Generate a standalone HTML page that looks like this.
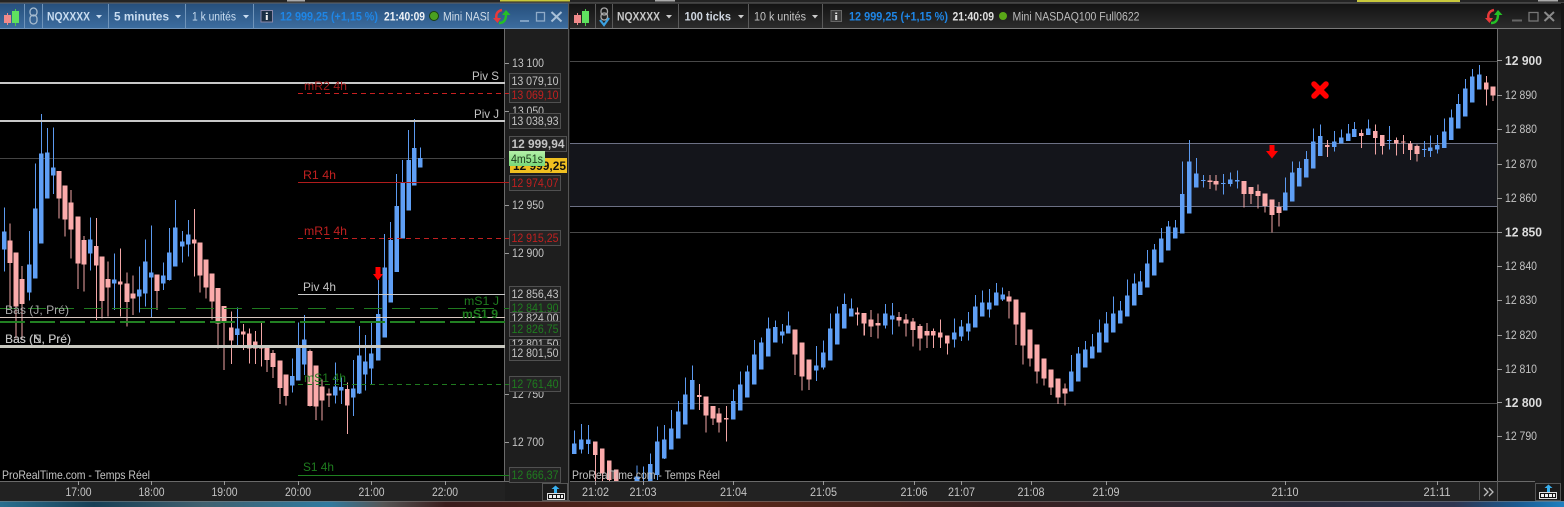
<!DOCTYPE html>
<html><head><meta charset="utf-8"><title>ProRealTime</title>
<style>
html,body{margin:0;padding:0;background:#111;width:1564px;height:507px;overflow:hidden}
svg{display:block}
text{font-family:"Liberation Sans",sans-serif;font-size:12px;fill:#c4c4c4}
.b{font-weight:bold}
.r{fill:#c02020}.dr{fill:#a01a1a}.gr{fill:#1f7c1f}
.bw{stroke:#5c9af0;stroke-width:3;fill:none;shape-rendering:crispEdges}
.bb{stroke:#5f9ff5;stroke-width:14;fill:none;shape-rendering:crispEdges}
.pw{stroke:#f2a6a6;stroke-width:3;fill:none;shape-rendering:crispEdges}
.pb{stroke:#fbabab;stroke-width:14;fill:none;shape-rendering:crispEdges}
.box{fill:#242424;stroke:#505050;stroke-width:1}
.tk{stroke:#999;stroke-width:1}
.ti{font-size:11.5px}
</style></head><body>
<svg width="1564" height="507" viewBox="0 0 1564 507" xmlns="http://www.w3.org/2000/svg">
<defs>
<linearGradient id="blu" x1="0" y1="0" x2="0" y2="1"><stop offset="0" stop-color="#264f7c"/><stop offset="1" stop-color="#3d6d9f"/></linearGradient>
<linearGradient id="drk" x1="0" y1="0" x2="0" y2="1"><stop offset="0" stop-color="#131313"/><stop offset="1" stop-color="#2c2c2c"/></linearGradient>
<linearGradient id="wall" x1="0" y1="0" x2="1" y2="0">
<stop offset="0" stop-color="#2a6f8f"/><stop offset=".06" stop-color="#173f55"/><stop offset=".13" stop-color="#40606f"/><stop offset=".21" stop-color="#2f7a9f"/><stop offset=".245" stop-color="#555"/><stop offset=".285" stop-color="#3a1c1c"/><stop offset=".45" stop-color="#5c2818"/><stop offset=".64" stop-color="#3a2020"/><stop offset=".83" stop-color="#2a2a3a"/><stop offset=".93" stop-color="#2e3550"/><stop offset=".97" stop-color="#1a5a90"/><stop offset="1" stop-color="#2080c0"/>
</linearGradient>
<linearGradient id="grn" x1="0" y1="0" x2="0" y2="1"><stop offset="0" stop-color="#b4f0a8"/><stop offset="1" stop-color="#78d878"/></linearGradient>
<clipPath id="cl"><rect x="0" y="29" width="505" height="452"/></clipPath>
<clipPath id="cr"><rect x="570" y="29" width="927" height="452"/></clipPath>
<g id="cdl"><path d="M7.5 13V25" stroke="#f08a8a"/><rect x="4" y="15" width="7" height="8" fill="#f08a8a"/><path d="M15.5 9V26" stroke="#45d045"/><rect x="12" y="11" width="7" height="12" fill="#5fe05f"/></g>
<g id="arw"><path d="M9 2C4 3 2 7 4 12" fill="none" stroke="#e83a3a" stroke-width="2.5"/><path d="M0 10L4.5 15L8 10Z" fill="#e83a3a"/><path d="M6 15C11 15 13 12 13 6" fill="none" stroke="#25c025" stroke-width="2.5"/><path d="M9 7L13 2L17.500 7Z" fill="#25c025"/></g>
</defs>

<!-- desktop strips -->
<rect width="1564" height="507" fill="#1a1a1a"/>
<rect x="0" y="0" width="1564" height="3" fill="#242424"/>
<rect x="500" y="0" width="70" height="1.500" fill="#c8c83c"/>
<rect x="1357" y="0" width="103" height="2" fill="#c8c83c"/>
<rect x="287" y="0" width="18" height="1.500" fill="#aaa"/>
<rect x="655" y="0" width="20" height="1.500" fill="#aaa"/>
<rect x="1538" y="0" width="20" height="1.500" fill="#aaa"/>
<rect x="0" y="2.500" width="1564" height="1" fill="#666"/>
<rect x="0" y="501" width="1564" height="6" fill="url(#wall)"/>
<rect x="0" y="500.500" width="1564" height="1" fill="#888"/>

<!-- LEFT WINDOW -->
<rect x="0" y="29" width="505" height="452" fill="#000"/>
<rect x="505" y="29" width="64" height="472" fill="#1e1e1e"/>
<rect x="0" y="481" width="505" height="20" fill="#222"/>
<path d="M504.500 29V481M0 481.500H542" stroke="#6a6a6a"/>
<path d="M0 158.500H505" stroke="#444"/>

<g clip-path="url(#cl)"><g transform="translate(0,110) scale(.33333)">
<path class="bw" d="M13 292V484M88 363V572M106 160V506M124 12V400M142 54V266M160 52V252M271 322V482M343 430V600M418 469V608M436 388V590M454 346V622M490 457V540M508 354V512M526 270V470M547 363V458M565 330V440M712 592V708M877 745V848M895 638V812M913 615V795M1006 757V880M1024 802V882M1060 750V918M1078 648V852M1096 675V842M1114 638V822M1135 510V752M1154 372V683M1172 336V578M1190 192V486M1208 150V385M1226 60V302M1243 27V227M1261 113V173"/>
<path class="bb" d="M13 364V419M88 463V548M106 295V506M124 130V400M142 127V266M160 172V197M271 388V431M343 508V521M418 538V560M436 454V551M454 487V503M490 496V521M508 427V510M526 352V470M547 394V410M565 373V404M712 655V675M877 798V827M895 708V812M913 688V764M1006 830V857M1024 831V842M1060 836V863M1078 736V851M1096 754V794M1114 731V776M1135 612V752M1154 472V683M1172 390V578M1190 288V486M1208 219V385M1226 150V302M1243 114V227M1261 144V173"/>
<path class="pw" d="M30 340V600M48 427V685M66 468V685M177 183V326M195 226V380M213 240V446M234 319V537M252 378V545M289 324V630M306 439V625M324 454V620M361 415V620M381 487V650M399 496V615M471 493V600M583 297V500M600 397V548M618 448V566M636 490V628M654 534V715M672 588V780M694 605V762M730 642V720M748 655V760M766 663V762M784 638V770M801 710V786M819 720V804M840 751V882M858 793V887M930 718V890M948 766V930M966 808V932M987 835V891M1042 818V972"/>
<path class="pb" d="M30 391V459M48 427V590M66 507V582M177 183V266M195 226V329M213 277V359M234 319V461M252 390V464M289 408V467M306 439V573M324 507V533M361 514V524M381 520V576M399 550V566M471 493V543M583 388V401M600 397V497M618 448V533M636 490V575M654 534V640M672 588V638M694 652V692M730 664V674M748 670V716M766 694V716M784 708V716M801 712V750M819 729V771M840 751V834M858 793V858M930 723V888M948 766V890M966 830V872M987 850V857M1042 837V887"/>
</g></g>

<!-- left level lines -->
<rect x="0" y="82" width="505" height="2" fill="#c8c8c8"/>
<path d="M298 93.500H510" stroke="#c82020" stroke-dasharray="5 4"/>
<rect x="0" y="120" width="505" height="2" fill="#c8c8c8"/>
<path d="M298 182.500H510" stroke="#b01c1c"/>
<path d="M298 238.500H510" stroke="#c02020" stroke-dasharray="5 4"/>
<path d="M298 294.500H505" stroke="#c8c8c8"/>
<path d="M0 308.500H510" stroke="#1f7a1f" stroke-dasharray="18 10"/>
<path d="M0 317.500H505" stroke="#d8c8c0"/>
<path d="M0 322H510" stroke="#228022" stroke-width="2" stroke-dasharray="25 5"/>
<rect x="0" y="345" width="505" height="3" fill="#c8c8c0"/>
<path d="M298 384.500H510" stroke="#1f7a1f" stroke-dasharray="5 4"/>
<path d="M298 475.500H510" stroke="#1f8020"/>

<!-- left labels -->
<text x="472" y="80" textLength="27" lengthAdjust="spacingAndGlyphs">Piv S</text>
<text x="304" y="90" class="dr" textLength="43" lengthAdjust="spacingAndGlyphs">mR2 4h</text>
<text x="474" y="118" textLength="25" lengthAdjust="spacingAndGlyphs">Piv J</text>
<text x="303" y="179" class="r" textLength="33" lengthAdjust="spacingAndGlyphs">R1 4h</text>
<text x="304" y="235" class="r" textLength="43" lengthAdjust="spacingAndGlyphs">mR1 4h</text>
<text x="303" y="291" textLength="33" lengthAdjust="spacingAndGlyphs">Piv 4h</text>
<text x="464" y="305" class="gr" textLength="35" lengthAdjust="spacingAndGlyphs">mS1 J</text>
<text x="462" y="318" class="gr b" textLength="36" lengthAdjust="spacingAndGlyphs">mS1 9</text>
<text x="5" y="314" style="fill:#a8a8a8" textLength="64" lengthAdjust="spacingAndGlyphs">Bas (J, Pré)</text>
<text x="5" y="343" style="fill:#b8b8b8" textLength="66" lengthAdjust="spacingAndGlyphs">Bas (S, Pré)</text>
<text x="5" y="343" style="fill:#c4c4c4" textLength="66" lengthAdjust="spacingAndGlyphs">Bas (N, Pré)</text>
<text x="304" y="382" class="gr" textLength="42" lengthAdjust="spacingAndGlyphs">mS1 4h</text>
<text x="303" y="471" class="gr" textLength="31" lengthAdjust="spacingAndGlyphs">S1 4h</text>
<text x="2" y="479" textLength="148" lengthAdjust="spacingAndGlyphs">ProRealTime.com - Temps Réel</text>
<rect x="375.500" y="267" width="5" height="8" fill="#f00"/><path d="M373 274H383L378 280.500Z" fill="#f00"/>

<!-- left axis -->
<path class="tk" d="M505 63.500H509M505 111.500H509M505 205.500H509M505 253.500H509M505 394.500H509M505 442.500H509"/>
<text x="512" y="67" textLength="32" lengthAdjust="spacingAndGlyphs">13 100</text>
<text x="512" y="115" textLength="32" lengthAdjust="spacingAndGlyphs">13 050</text>
<text x="512" y="209" textLength="32" lengthAdjust="spacingAndGlyphs">12 950</text>
<text x="512" y="257" textLength="32" lengthAdjust="spacingAndGlyphs">12 900</text>
<text x="512" y="398" textLength="32" lengthAdjust="spacingAndGlyphs">12 750</text>
<text x="512" y="446" textLength="32" lengthAdjust="spacingAndGlyphs">12 700</text>

<rect class="box" x="509.500" y="73.500" width="51" height="15"/><text x="511.500" y="85" textLength="47" lengthAdjust="spacingAndGlyphs">13 079,10</text>
<rect class="box" x="509.500" y="88.500" width="51" height="14"/><text x="511.500" y="99" class="r" textLength="47" lengthAdjust="spacingAndGlyphs">13 069,10</text>
<rect class="box" x="509.500" y="113.500" width="51" height="15"/><text x="511.500" y="125" textLength="47" lengthAdjust="spacingAndGlyphs">13 038,93</text>
<rect class="box" x="509.500" y="136.500" width="57" height="15"/><text x="511.500" y="148" class="b" textLength="53" lengthAdjust="spacingAndGlyphs">12 999,94</text>
<rect x="510" y="158" width="57" height="15" fill="#f0c020"/><text x="513" y="170" class="b" style="fill:#111" textLength="53" lengthAdjust="spacingAndGlyphs">12 999,25</text>
<rect x="509" y="151" width="36" height="15" fill="url(#grn)"/><text x="511" y="163" style="fill:#1c3a1c" textLength="32" lengthAdjust="spacingAndGlyphs">4m51s</text>
<rect class="box" x="509.500" y="175.500" width="51" height="15"/><text x="511.500" y="187" class="r" textLength="47" lengthAdjust="spacingAndGlyphs">12 974,07</text>
<rect class="box" x="509.500" y="230.500" width="51" height="15"/><text x="511.500" y="242" class="r" textLength="47" lengthAdjust="spacingAndGlyphs">12 915,25</text>
<rect class="box" x="509.500" y="286.500" width="51" height="15"/><text x="511.500" y="298" textLength="47" lengthAdjust="spacingAndGlyphs">12 856,43</text>
<rect class="box" x="509.500" y="300.500" width="51" height="15"/><text x="511.500" y="312" class="gr" textLength="47" lengthAdjust="spacingAndGlyphs">12 841,90</text>
<rect class="box" x="509.500" y="312.500" width="51" height="12"/><text x="511.500" y="322" textLength="47" lengthAdjust="spacingAndGlyphs">12 824,00</text>
<rect class="box" x="509.500" y="321.500" width="51" height="15"/><text x="511.500" y="333" class="gr" textLength="47" lengthAdjust="spacingAndGlyphs">12 826,75</text>
<rect class="box" x="509.500" y="339.500" width="51" height="8"/><text x="511.500" y="348" textLength="47" lengthAdjust="spacingAndGlyphs">12 801,50</text>
<rect class="box" x="509.500" y="345.500" width="51" height="15"/><text x="511.500" y="357" textLength="47" lengthAdjust="spacingAndGlyphs">12 801,50</text>
<rect class="box" x="509.500" y="376.500" width="51" height="15"/><text x="511.500" y="388" class="gr" textLength="47" lengthAdjust="spacingAndGlyphs">12 761,40</text>
<rect class="box" x="509.500" y="467.500" width="51" height="15"/><text x="511.500" y="479" class="gr" textLength="47" lengthAdjust="spacingAndGlyphs">12 666,37</text>

<!-- left time axis -->
<path class="tk" d="M78.500 481V485M151.500 481V485M224.500 481V485M298.500 481V485M371.500 481V485M445.500 481V485"/>
<g text-anchor="middle">
<text x="78.500" y="496" textLength="26" lengthAdjust="spacingAndGlyphs">17:00</text>
<text x="151.500" y="496" textLength="26" lengthAdjust="spacingAndGlyphs">18:00</text>
<text x="224.500" y="496" textLength="26" lengthAdjust="spacingAndGlyphs">19:00</text>
<text x="298" y="496" textLength="26" lengthAdjust="spacingAndGlyphs">20:00</text>
<text x="371.500" y="496" textLength="26" lengthAdjust="spacingAndGlyphs">21:00</text>
<text x="445" y="496" textLength="26" lengthAdjust="spacingAndGlyphs">22:00</text>
</g>
<rect x="542.500" y="483.500" width="25" height="17" fill="#1a1a1a" stroke="#555"/>
<path d="M555.500 493V488" stroke="#38b0f0" stroke-width="3"/><path d="M551.500 489L555.500 485.500L559.500 489Z" fill="#38b0f0"/>
<rect x="547.500" y="493.500" width="17" height="6" fill="#111" stroke="#ddd"/><path d="M549 496.500H563" stroke="#eee" stroke-width="3" stroke-dasharray="3 1"/>

<!-- left title bar -->
<rect x="0" y="3.500" width="569" height="25" fill="url(#blu)"/>
<path d="M0 28.500H569" stroke="#7093b8"/>
<path d="M24.500 4V28M42.500 4V28M108.500 4V28M185.500 4V28M253.500 4V28" stroke="#6f94ba"/>
<use href="#cdl"/>
<rect x="30" y="8" width="7" height="8" rx="3.500" fill="none" stroke="#a8bdd0" stroke-width="1.300"/>
<rect x="30" y="15" width="7" height="9" rx="3.500" fill="none" stroke="#a8bdd0" stroke-width="1.300"/>
<text x="47" y="20.500" class="b ti" style="fill:#c8dcf0" textLength="43" lengthAdjust="spacingAndGlyphs">NQXXXX</text>
<path d="M96 15H102L99 18.500Z" fill="#c8dcf0"/>
<text x="114" y="20.500" class="b ti" style="fill:#c8dcf0" textLength="55" lengthAdjust="spacingAndGlyphs">5 minutes</text>
<path d="M175 15H181L178 18.500Z" fill="#c8dcf0"/>
<text x="192" y="20.500" class="ti" style="fill:#c8dcf0" textLength="44" lengthAdjust="spacingAndGlyphs">1 k unités</text>
<path d="M243 15H249L246 18.500Z" fill="#c8dcf0"/>
<rect x="261" y="10.500" width="11.500" height="11.500" fill="#1b2f44" stroke="#88a"/>
<path d="M266.800 12.500V14M266.800 15V20" stroke="#eee" stroke-width="2"/>
<text x="280" y="20.500" class="b ti" style="fill:#1f86e6" textLength="98" lengthAdjust="spacingAndGlyphs">12 999,25 (+1,15 %)</text>
<text x="384" y="20.500" class="b ti" style="fill:#eef2f6" textLength="41" lengthAdjust="spacingAndGlyphs">21:40:09</text>
<circle cx="434" cy="16" r="4.500" fill="#4aa020" stroke="#1a4010"/>
<svg x="443" y="4" width="46" height="24"><text x="0" y="16.500" class="ti" style="fill:#d0dce8" textLength="127" lengthAdjust="spacingAndGlyphs">Mini NASDAQ100 Full0622</text></svg>
<use href="#arw" x="493" y="8"/>
<path d="M520 21H529" stroke="#7d9fc2" stroke-width="2"/>
<rect x="536.500" y="12.500" width="8" height="8.500" fill="none" stroke="#8fabc8" stroke-width="1.300"/>
<path d="M551.500 12L561.500 21.500M561.500 12L551.500 21.500" stroke="#a8c0d8" stroke-width="2"/>
<path d="M568.500 3V501" stroke="#555"/>

<!-- RIGHT WINDOW -->
<rect x="570" y="29" width="927" height="452" fill="#000"/>
<rect x="1497" y="29" width="64" height="472" fill="#1e1e1e"/>
<rect x="570" y="481" width="927" height="20" fill="#222"/>
<rect x="570" y="143" width="927" height="63" fill="#14151b"/>
<path d="M570 61.500H1497M570 232.500H1497M570 403.500H1497" stroke="#484848"/>
<path d="M570 143.500H1497M570 206.500H1497" stroke="#6c7084"/>
<path d="M1497.500 29V481M570 481.500H1535" stroke="#6a6a6a"/>

<g clip-path="url(#cr)">
<g transform="translate(570,280) scale(.33333)">
<path class="bw" d="M13 452V522M34 432V520M55 435V522M201 556V610M220 560V610M241 520V605M262 440V600M283 435V537M304 390V509M325 363V476M346 292V434M367 256V389M490 328V419M511 274V392M532 256V353M553 180V314M574 172V269M595 112V230M616 121V188M637 132V190M655 94V161M739 198V303M760 181V268M781 100V242M802 79V194M823 40V146M844 55V110"/>
<path class="bb" d="M13 490V522M34 478V508M55 478V492M201 590V610M241 552V605M262 484V585M283 478V536M304 445V509M325 394V475M346 343V434M367 300V389M490 363V419M511 313V392M532 274V353M553 223V314M574 187V269M595 145V230M616 141V188M637 154V167M655 136V161M739 256V272M760 217V263M781 145V242M802 100V194M823 72V146M844 85V110"/>
<path class="pw" d="M76 484V610M97 505V610M118 541V610M139 568V610M388 312V390M408 349V458M429 378V435M447 384V458M469 378V485M675 148V285M696 187V332M717 238V330M862 82V137M883 100V167"/>
<path class="pb" d="M76 484V525M97 505V580M118 541V600M139 568V610M388 345V351M408 349V407M429 378V416M447 400V428M469 414V419M675 148V224M696 187V290M717 238V299M862 97V104M883 100V131"/>
</g>
<g transform="translate(860,130) scale(.33333)">
<path class="bw" d="M76 522V596M97 519V613M283 565V653M304 570V633M325 546V632M346 495V593M367 482V560M388 477V563M409 459V527M428 472V513M634 675V785M655 651V755M676 633V713M697 612V686M718 568V668M739 546V638M760 499V608M781 513V581M802 448V560M823 430V527M841 423V495M862 360V473M883 342V437M904 294V398M925 273V362M946 270V326M967 94V311M988 30V250M1009 84V173"/>
<path class="bb" d="M76 550V587M97 556V569M283 607V629M304 589V620M325 580V605M346 529V593M367 517V560M388 517V539M409 487V527M428 493V509M634 724V785M655 670V755M676 658V713M697 649V686M718 607V668M739 580V638M760 550V608M781 541V581M802 496V560M823 460V527M841 454V495M862 400V473M883 358V437M904 325V398M925 289V362M946 292V326M967 192V311M988 94V250M1009 130V173"/>
<path class="pw" d="M12 549V617M33 540V621M54 550V626M117 546V590M138 552V620M159 564V650M180 582V662M201 579V654M220 595V654M241 568V654M262 616V674M447 483V566M468 508V645M489 547V704M510 598V710M531 643V760M552 685V767M573 718V795M594 745V822M615 760V827"/>
<path class="pb" d="M12 549V581M33 568V590M54 579V587M117 561V572M138 568V581M159 574V600M180 588V626M194 610H208M213 610H227M234 615H248M262 616V641M447 499V515M468 508V584M489 547V647M510 598V686M531 643V725M552 685V746M573 718V773M594 745V803M615 775V791"/>
</g>
<g transform="translate(1200,60) scale(.33333)">
<path class="bw" d="M10 345V383M70 342V404M91 338V380M112 332V385M256 352V452M277 304V425M298 304V380M319 273V353M340 205V326M361 193V288M403 213V275M424 208V251M445 192V243M463 186V231M505 178V225M568 198V268M673 243V291M691 226V291M712 225V280M733 175V264M754 148V240M775 102V206M796 57V170M817 27V128M838 15V89"/>
<path class="bb" d="M91 358V372M112 360V365M256 397V452M277 337V425M298 324V380M319 297V353M340 244V326M361 228V288M403 244V261M424 232V251M445 220V243M463 207V231M505 205V225M691 262V273M712 255V268M733 214V264M754 172V240M775 132V206M796 85V170M817 49V128M838 43V89"/>
<path d="M3 361H17M63 371H77M561 241H575M666 269H680" stroke="#5f9ff5" stroke-width="3" fill="none" shape-rendering="crispEdges"/>
<path class="pw" d="M30 345V387M48 345V392M132 363V443M153 381V432M174 373V445M195 400V458M216 418V518M237 426V500M382 240V291M484 208V264M526 193V283M547 225V283M589 232V286M610 225V282M631 243V300M651 254V305M859 48V137M879 79V123"/>
<path class="pb" d="M30 361V366M48 363V374M132 363V402M153 381V402M174 393V408M195 400V438M216 418V465M237 441V459M382 255V261M484 219V228M526 213V234M547 225V258M589 240V251M610 245V248M631 250V270M651 258V282M859 67V89M879 79V107"/>
</g>
</g>

<!-- markers -->
<rect x="1269.500" y="145" width="5" height="7" fill="#f00"/><path d="M1266 151H1278L1272 158.500Z" fill="#f00"/>
<path d="M1314 84L1326 96M1326 84L1314 96" stroke="#f00" stroke-width="5.500" stroke-linecap="round"/>

<text x="572" y="479" textLength="148" lengthAdjust="spacingAndGlyphs">ProRealTime.com - Temps Réel</text>

<!-- right axis -->
<path class="tk" d="M1497 60.500H1502M1497 95.500H1502M1497 129.500H1502M1497 164.500H1502M1497 198.500H1502M1497 232.500H1502M1497 266.500H1502M1497 300.500H1502M1497 335.500H1502M1497 369.500H1502M1497 402.500H1502M1497 436.500H1502"/>
<g>
<text x="1505" y="65" class="b" style="font-size:12.500px;fill:#dcdcdc" textLength="37" lengthAdjust="spacingAndGlyphs">12 900</text>
<text x="1505" y="99" textLength="32" lengthAdjust="spacingAndGlyphs">12 890</text>
<text x="1505" y="133" textLength="32" lengthAdjust="spacingAndGlyphs">12 880</text>
<text x="1505" y="168" textLength="32" lengthAdjust="spacingAndGlyphs">12 870</text>
<text x="1505" y="202" textLength="32" lengthAdjust="spacingAndGlyphs">12 860</text>
<text x="1505" y="236.500" class="b" style="font-size:12.500px;fill:#dcdcdc" textLength="37" lengthAdjust="spacingAndGlyphs">12 850</text>
<text x="1505" y="270" textLength="32" lengthAdjust="spacingAndGlyphs">12 840</text>
<text x="1505" y="304" textLength="32" lengthAdjust="spacingAndGlyphs">12 830</text>
<text x="1505" y="339" textLength="32" lengthAdjust="spacingAndGlyphs">12 820</text>
<text x="1505" y="373" textLength="32" lengthAdjust="spacingAndGlyphs">12 810</text>
<text x="1505" y="407" class="b" style="font-size:12.500px;fill:#dcdcdc" textLength="37" lengthAdjust="spacingAndGlyphs">12 800</text>
<text x="1505" y="440" textLength="32" lengthAdjust="spacingAndGlyphs">12 790</text>
</g>

<!-- right time axis -->
<path class="tk" d="M595.500 481V485M643.500 481V485M733.500 481V485M823.500 481V485M914.500 481V485M961.500 481V485M1031.500 481V485M1106.500 481V485M1285.500 481V485M1437.500 481V485"/>
<g text-anchor="middle">
<text x="595.500" y="496" textLength="27" lengthAdjust="spacingAndGlyphs">21:02</text>
<text x="643" y="496" textLength="27" lengthAdjust="spacingAndGlyphs">21:03</text>
<text x="733.500" y="496" textLength="27" lengthAdjust="spacingAndGlyphs">21:04</text>
<text x="823.500" y="496" textLength="27" lengthAdjust="spacingAndGlyphs">21:05</text>
<text x="914" y="496" textLength="27" lengthAdjust="spacingAndGlyphs">21:06</text>
<text x="961.500" y="496" textLength="27" lengthAdjust="spacingAndGlyphs">21:07</text>
<text x="1031" y="496" textLength="27" lengthAdjust="spacingAndGlyphs">21:08</text>
<text x="1106" y="496" textLength="27" lengthAdjust="spacingAndGlyphs">21:09</text>
<text x="1285" y="496" textLength="27" lengthAdjust="spacingAndGlyphs">21:10</text>
<text x="1437" y="496" textLength="27" lengthAdjust="spacingAndGlyphs">21:11</text>
</g>
<path d="M1479.500 481V500M1497.500 481V501" stroke="#5a5a5a"/>
<path d="M1484 488L1488 492L1484 496M1489 488L1493 492L1489 496" fill="none" stroke="#bbb" stroke-width="1.300"/>
<rect x="1535.500" y="483.500" width="25" height="17" fill="#1a1a1a" stroke="#555"/>
<path d="M1548.500 492V487" stroke="#38b0f0" stroke-width="3"/><path d="M1544.500 488L1548.500 484.500L1552.500 488Z" fill="#38b0f0"/>
<rect x="1539.500" y="492.500" width="17" height="6" fill="#111" stroke="#ddd"/><path d="M1541 495.500H1555" stroke="#eee" stroke-width="3" stroke-dasharray="3 1"/>

<!-- right title bar -->
<rect x="570" y="3.500" width="991" height="25" fill="url(#drk)"/>
<path d="M570 28.500H1561" stroke="#7a7a7a"/>
<path d="M595.500 4V28M612.500 4V28M678.500 4V28M748.500 4V28M822.500 4V28" stroke="#5a5a5a"/>
<use href="#cdl" x="570"/>
<rect x="601" y="8" width="6.500" height="7" rx="3" fill="none" stroke="#aaa" stroke-width="1.300"/>
<rect x="601" y="13" width="6.500" height="7" rx="3" fill="none" stroke="#aaa" stroke-width="1.300"/>
<path d="M600 20L604 25L609 18" fill="none" stroke="#3aa0e0" stroke-width="2.200"/>
<text x="617" y="20.500" class="b ti" style="fill:#c8c8c8" textLength="43" lengthAdjust="spacingAndGlyphs">NQXXXX</text>
<path d="M666 15H672L669 18.500Z" fill="#ccc"/>
<text x="684.500" y="20.500" class="b ti" style="fill:#cfd6e0" textLength="46.500" lengthAdjust="spacingAndGlyphs">100 ticks</text>
<path d="M738 15H744L741 18.500Z" fill="#ccc"/>
<text x="754" y="20.500" class="ti" style="fill:#c4c4c4" textLength="52" lengthAdjust="spacingAndGlyphs">10 k unités</text>
<path d="M812 15H818L815 18.500Z" fill="#ccc"/>
<rect x="831" y="10.500" width="10.500" height="11" fill="#3a3a3a" stroke="#666"/>
<path d="M836.200 12.500V14M836.200 15V20" stroke="#ddd" stroke-width="2"/>
<text x="849" y="20.500" class="b ti" style="fill:#1f86e6" textLength="99" lengthAdjust="spacingAndGlyphs">12 999,25 (+1,15 %)</text>
<text x="952.500" y="20.500" class="b ti" style="fill:#e0e0e0" textLength="41.500" lengthAdjust="spacingAndGlyphs">21:40:09</text>
<circle cx="1003" cy="16" r="4" fill="#5aa818"/>
<text x="1012.500" y="20.500" class="ti" style="fill:#bcbcbc" textLength="127" lengthAdjust="spacingAndGlyphs">Mini NASDAQ100 Full0622</text>
<use href="#arw" x="1485" y="8"/>
<path d="M1512 20.500H1522" stroke="#666" stroke-width="2"/>
<rect x="1529" y="12.500" width="9" height="8.500" fill="none" stroke="#777" stroke-width="1.300"/>
<path d="M1544.500 12L1554 21M1554 12L1544.500 21" stroke="#8a8a8a" stroke-width="2"/>
<rect x="1561" y="3" width="3" height="498" fill="#161616"/>
</svg>
</body></html>
